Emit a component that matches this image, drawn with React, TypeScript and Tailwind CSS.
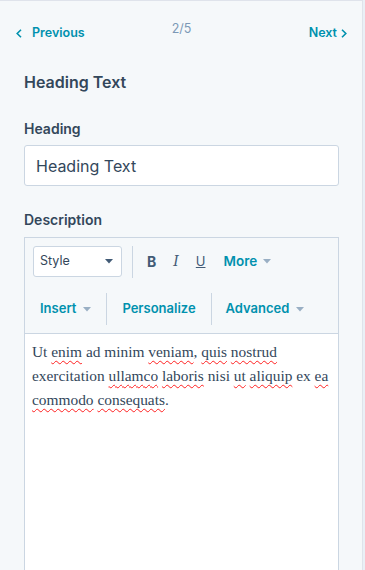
import React from "react";

const Caret = ({ className = "" }: { className?: string }) => (
  <svg width="8" height="5" viewBox="0 0 8 5" className={className}>
    <path d="M0 0 L8 0 L4 4.5 Z" fill="currentColor" />
  </svg>
);

const Sq = ({ children }: { children: React.ReactNode }) => (
  <span className="underline decoration-wavy decoration-[#ff2020] decoration-1 underline-offset-[3px]">{children}</span>
);

export default function App() {
  const sans = { fontFamily: "Inter, 'Open Sans', sans-serif" };
  return (
    <div className="w-[365px] h-[570px] flex overflow-hidden bg-[#f5f8fa]" style={sans}>
      <div className="w-[363px] h-full border-t border-r border-[#dfe3eb] flex flex-col">
        {/* nav */}
        <div className="flex items-center pl-[16px] pr-[15px] pt-[23px] h-[42px]">
          <div className="flex items-center gap-[10px] text-[#0091ae] font-semibold text-[12.5px]">
            <svg width="6" height="9" viewBox="0 0 6 9">
              <path d="M5 0.8 L1.2 4.5 L5 8.2" stroke="#0091ae" strokeWidth="1.6" fill="none" />
            </svg>
            <span>Previous</span>
          </div>
          <div className="ml-[87px] text-[#7c98b6] text-[12.5px] mb-[8px]">2/5</div>
          <div className="flex-1" />
          <div className="flex items-center gap-[4px] text-[#0091ae] font-semibold text-[12.5px]">
            <span>Next</span>
            <svg width="6" height="9" viewBox="0 0 6 9">
              <path d="M1 0.8 L4.8 4.5 L1 8.2" stroke="#0091ae" strokeWidth="1.6" fill="none" />
            </svg>
          </div>
        </div>

        <div className="pl-[24px] pr-[23px] flex flex-col">
          <div className="mt-[27px] h-[24px] leading-[24px] text-[16px] font-semibold text-[#33475b]">Heading Text</div>
          <div className="mt-[25px] h-[20px] leading-[20px] text-[14px] font-semibold text-[#33475b]">Heading</div>
          <div className="mt-[6px] h-[41px] bg-white border border-[#cbd6e2] rounded-[3px] flex items-center pl-[11px] text-[16px] text-[#33475b]">
            Heading Text
          </div>
          <div className="mt-[24px] h-[20px] leading-[20px] text-[14px] font-semibold text-[#33475b]">Description</div>
          <div className="mt-[7px] border border-[#cbd6e2] h-[400px] flex flex-col">
            <div className="bg-[#f5f8fa] border-b border-[#cbd6e2] pt-[8px] pb-[8px] flex flex-col">
              <div className="flex items-center pl-[8px] h-[31px]">
                <div className="w-[89px] h-[31px] bg-white border border-[#cbd6e2] rounded-[3px] flex items-center justify-between pl-[6px] pr-[8px] text-[12.5px] text-[#33475b]">
                  <span>Style</span>
                  <Caret className="text-[#425b76]" />
                </div>
                <div className="ml-[10px] w-px h-[32px] bg-[#cbd6e2]" />
                <span className="ml-[14px] text-[14px] font-bold text-[#425b76]">B</span>
                <span className="ml-[17px] text-[14px] italic text-[#425b76]" style={{ fontFamily: "'DejaVu Serif', serif" }}>I</span>
                <span className="ml-[17px] text-[13px] underline text-[#425b76]">U</span>
                <span className="ml-[18px] text-[13.5px] font-semibold text-[#0091ae]">More</span>
                <Caret className="ml-[6px] text-[#99afc4]" />
              </div>
              <div className="flex items-center mt-[16px] h-[32px]">
                <div className="flex items-center pl-[15px] pr-[15px] text-[13px] font-semibold text-[#0091ae]">
                  <span>Insert</span>
                  <Caret className="ml-[7px] text-[#99afc4]" />
                </div>
                <div className="w-px h-[32px] bg-[#cbd6e2]" />
                <div className="px-[15px] text-[13px] font-semibold text-[#0091ae]">Personalize</div>
                <div className="w-px h-[32px] bg-[#cbd6e2]" />
                <div className="flex items-center pl-[14px] text-[13px] font-semibold text-[#0091ae]">
                  <span>Advanced</span>
                  <Caret className="ml-[7px] text-[#99afc4]" />
                </div>
              </div>
            </div>
            <div
              className="flex-1 bg-white pl-[7px] pr-[3px] pt-[6px] text-[15.4px] leading-[24px] text-[#33475b]"
              style={{ fontFamily: "'Liberation Serif', serif" }}
            >
              Ut <Sq>enim</Sq> ad minim <Sq>veniam</Sq>, <Sq>quis</Sq> <Sq>nostrud</Sq> exercitation <Sq>ullamco</Sq>{" "}
              <Sq>laboris</Sq> nisi <Sq>ut</Sq> <Sq>aliquip</Sq> ex <Sq>ea</Sq> <Sq>commodo</Sq> <Sq>consequats</Sq>.
            </div>
          </div>
        </div>
      </div>
      <div className="flex-1 bg-[#eaf0f6]" />
    </div>
  );
}
